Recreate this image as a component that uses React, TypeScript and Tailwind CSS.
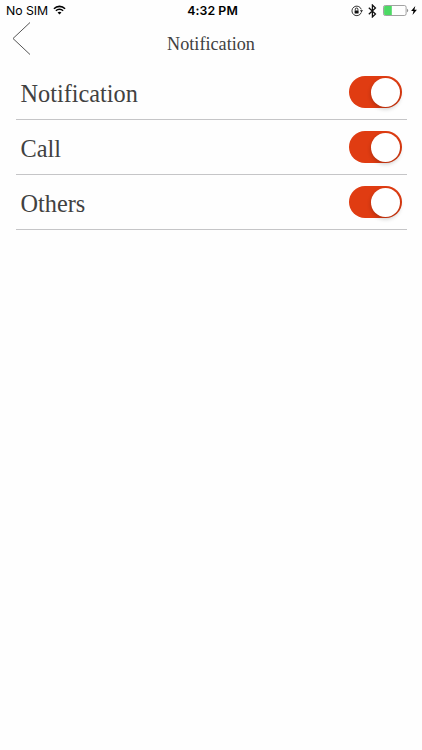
import React, { useState } from "react";

function StatusBar() {
  return (
    <div className="grid h-5 grid-cols-3 items-center pt-px font-['Inter','Liberation_Sans',sans-serif] text-[12.3px] leading-5 text-black">
      <div className="flex items-center gap-[5px] pl-[6px]">
        <span className="tracking-[-0.05px]">No SIM</span>
        <svg width="13" height="10" viewBox="0 0 14 10" fill="none" className="-mt-[2px]">
          <path d="M1 3.6a8.4 8.4 0 0 1 12 0" stroke="#000" strokeWidth="1.7" />
          <path d="M3.1 5.9a5.4 5.4 0 0 1 7.8 0" stroke="#000" strokeWidth="1.6" />
          <path d="M7 9.9 4.9 7.8a3 3 0 0 1 4.2 0Z" fill="#000" />
        </svg>
      </div>
      <div className="text-center font-semibold tracking-[0.1px]">
        <span className="pl-[3px]">4:32 PM</span>
      </div>
      <div className="-mt-px flex items-center justify-end pr-[5px]">
        <svg width="12" height="12" viewBox="0 0 12 12" fill="none" className="mr-[5px]">
          <path d="M10.3 7.4A4.8 4.8 0 1 1 10.3 4.4" stroke="#222" strokeWidth="0.9" />
          <path d="M8.9 5.3h3.1l-1.5 2Z" fill="#111" />
          <rect x="3.6" y="5.4" width="4" height="3" rx=".4" fill="#111" />
          <path d="M4.3 5.5V4.3a1.3 1.3 0 0 1 2.6 0v1.2" stroke="#111" strokeWidth="0.9" />
        </svg>
        <svg width="9" height="14" viewBox="0 0 9 14" fill="none" className="mr-[6px]">
          <path d="m.8 3.8 6.7 6.2-3.1 3V1l3.1 3L.8 10.2" stroke="#111" strokeWidth="1.25" />
        </svg>
        <svg width="26" height="11" viewBox="0 0 26 11" fill="none" className="mr-[2px]">
          <rect x=".5" y=".5" width="22.6" height="10" rx="1.7" stroke="#8a8a8a" strokeWidth=".8" />
          <path d="M2 1.1h6.8v8.8H2a.9.9 0 0 1-.9-.9V2a.9.9 0 0 1 .9-.9Z" fill="#4cd964" />
          <path d="M24.2 3.8c1.3.4 1.3 3 0 3.4Z" fill="#777" />
        </svg>
        <svg width="6" height="9" viewBox="0 0 6 9">
          <path d="M4.3 0 .1 5h2.4L1.5 9 5.9 3.8H3.4Z" fill="#000" />
        </svg>
      </div>
    </div>
  );
}

function Toggle({ label }: { label: string }) {
  const [on, setOn] = useState(true);
  return (
    <button
      type="button"
      role="switch"
      aria-checked={on}
      aria-label={label}
      onClick={() => setOn(!on)}
      className={`flex h-8 w-[52.5px] items-center rounded-full px-[1.5px] ${on ? "justify-end bg-[#e03c12]" : "justify-start bg-gray-300"}`}
    >
      <span className="size-[29px] rounded-full bg-white shadow-[0_2px_4px_rgba(0,0,0,0.22)]" />
    </button>
  );
}

export default function App() {
  return (
    <main className="h-[750px] w-full overflow-hidden bg-[#fefefe] font-['Liberation_Serif',serif] text-[#414141] [font-variant-ligatures:none]">
      <StatusBar />
      <header className="grid h-[45px] grid-cols-[60px_1fr_60px]">
        <button type="button" aria-label="Back" className="pl-3">
          <svg width="20" height="35" viewBox="0 0 20 35" fill="none" className="-mt-[9px]">
            <path d="M18 1.5 1 17.5l17 16" stroke="#555" strokeWidth="1" />
          </svg>
        </button>
        <h1 className="pt-[12px] text-center text-[18.2px] leading-6">Notification</h1>
      </header>
      <ul className="ml-[15.5px] w-[391px]">
        {["Notification", "Call", "Others"].map((label) => (
          <li key={label} className="flex h-[55px] items-center justify-between border-b border-[#c5c5c7] pr-[5px] pl-[5px]">
            <span className="pt-[4px] text-[24.3px] leading-8">{label}</span>
            <Toggle label={label} />
          </li>
        ))}
      </ul>
    </main>
  );
}
